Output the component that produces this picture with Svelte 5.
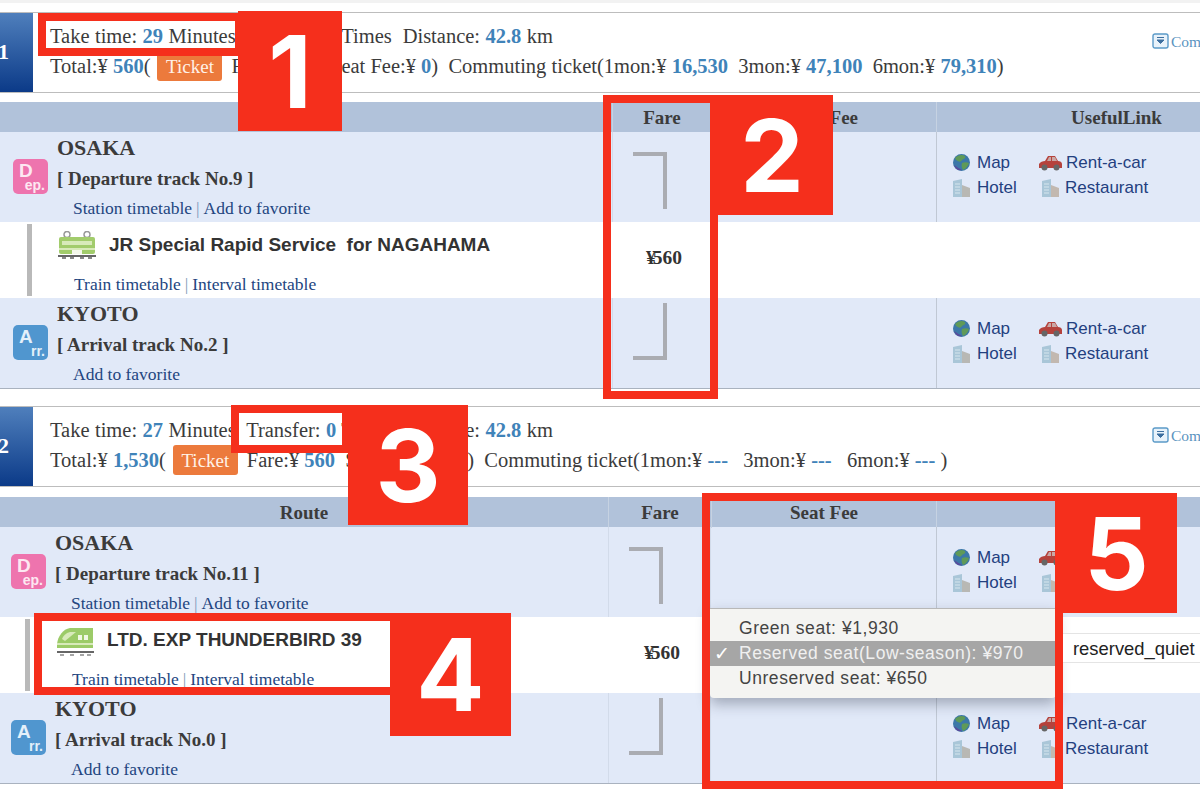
<script>
  // Route search results, two candidates
  const routes = [
    {
      no: 1,
      cls: 'first',
      time: 29,
      total: '560',
      seat: '0',
      commute: ['16,530', '47,100', '79,310'],
      gapped: false,
      depTrack: 'No.9',
      train: 'JR Special Rapid Service  for NAGAHAMA',
      arrTrack: 'No.2'
    },
    {
      no: 2,
      cls: 'second',
      time: 27,
      total: '1,530',
      seat: '970',
      commute: ['---', '---', '---'],
      gapped: true,
      depTrack: 'No.11',
      train: 'LTD. EXP THUNDERBIRD 39',
      arrTrack: 'No.0'
    }
  ];

  const callouts = [
    { n: 1, box: 'box1', tag: 'tag1' },
    { n: 2, box: 'box2', tag: 'tag2' },
    { n: 3, box: 'box3', tag: 'tag3' },
    { n: 4, box: 'box4', tag: 'tag4' },
    { n: 5, box: 'box5', tag: 'tag5' }
  ];
</script>

{#snippet links()}
  <div class="useful">
    <div class="link">
      <svg width="19" height="19" viewBox="0 0 19 19">
        <circle cx="9.5" cy="9.5" r="8.5" fill="#3c78a8" />
        <path d="M3 5c3-3 7-4 10-2 1 2-1 3-3 4-1 2-3 2-4 1C5 8 4 7 3 5z" fill="#5f9a58" />
        <path d="M10 10c2-1 5-1 7 0-1 3-3 6-6 7-1-2-2-4-1-7z" fill="#5f9a58" />
        <path d="M2 12c3 2 6 4 8 5-3 1-6 0-8-5z" fill="#5a4a9c" />
      </svg>
      <span>Map</span>
    </div>
    <div class="link">
      <svg width="25" height="17" viewBox="0 0 25 17">
        <path d="M1 10c1-2 4-3 6-3l3-5h7l3 5c2 0 4 1 4 3v4H1z" fill="#b5423c" />
        <path d="M9 7l2-4h2v4zM14 3h3l2 4h-5z" fill="#c9a8a6" />
        <circle cx="6.5" cy="13.500" r="3" fill="#666" />
        <circle cx="18.5" cy="13.500" r="3" fill="#666" />
      </svg>
      <span>Rent-a-car</span>
    </div>
    <div class="link">
      <svg width="19" height="20" viewBox="0 0 19 20">
        <path d="M1 3l9-2v18H1z" fill="#a9c6d8" />
        <path d="M10 7l8 3v9h-8z" fill="#b8b8b4" />
        <path d="M3 6h5M3 9h5M3 12h5M3 15h5" stroke="#d6e6ee" stroke-width="1" />
      </svg>
      <span>Hotel</span>
    </div>
    <div class="link">
      <svg width="19" height="20" viewBox="0 0 19 20">
        <path d="M1 3l9-2v18H1z" fill="#a9c6d8" />
        <path d="M10 7l8 3v9h-8z" fill="#c2b8b0" />
        <path d="M3 6h5M3 9h5M3 12h5M3 15h5" stroke="#d6e6ee" stroke-width="1" />
      </svg>
      <span>Restaurant</span>
    </div>
  </div>
{/snippet}

{#snippet stop(kind, name, track, timetable)}
  <div class="row stop">
    <div class="cell route">
      <div class="badge {kind}">
        <span class="big">{kind === 'dep' ? 'D' : 'A'}</span>
        <span class="small">{kind === 'dep' ? 'ep.' : 'rr.'}</span>
      </div>
      <div class="station">
        <div class="name">{name}</div>
        <div class="track">[ {kind === 'dep' ? 'Departure' : 'Arrival'} track {track} ]</div>
        <div class="sub">
          {#if timetable}<a href="#top">Station timetable</a><i>|</i>{/if}<a href="#top">Add to favorite</a>
        </div>
      </div>
    </div>
    <div class="cell fare">
      <span class="bracket {kind}"></span>
    </div>
    <div class="cell seat"></div>
    <div class="cell usefulcell">
      {@render links()}
    </div>
  </div>
{/snippet}

<div class="page">
  {#each routes as r}
    <section class={r.cls}>
      <div class="summary">
        <div class="num">{r.no}</div>
        <div class="lines">
          <div class="first-line">
            Take time: <b>{r.time}</b> Minutes&nbsp; Transfer: <b>0</b> Times&nbsp; Distance: <b>42.8</b> km
          </div>
          <div>
            Total:¥ <b>{r.total}</b>(<span class="ticket">Ticket</span>Fare:¥ <b>560</b>&nbsp; Seat Fee:¥ <b>{r.seat}</b>)&nbsp; Commuting ticket(1mon:¥ <b>{r.commute[0]}</b>{r.gapped ? '\u00a0' : ''}&nbsp; 3mon:¥ <b>{r.commute[1]}</b>{r.gapped ? '\u00a0' : ''}&nbsp; 6mon:¥ <b>{r.commute[2]}</b>{r.gapped ? ' ' : ''})
          </div>
        </div>
        <div class="comment">
          <svg width="17" height="16" viewBox="0 0 17 16">
            <rect x="1" y="1" width="15" height="14" rx="2" fill="#e8f2fa" stroke="#5b9ac8" stroke-width="1.4" />
            <path d="M5 4.500h7M5 7l3.500 3.500L12 7z" fill="#3d6f9f" stroke="#3d6f9f" />
          </svg>
          <span>Comment</span>
        </div>
      </div>

      <div class="table">
        <div class="row head">
          <div class="cell route">Route</div>
          <div class="cell fare">Fare</div>
          <div class="cell seat">Seat Fee</div>
          <div class="cell usefulcell">UsefulLink</div>
        </div>

        {@render stop('dep', 'OSAKA', r.depTrack, true)}

        <div class="row train">
          <div class="cell route">
            <div class="rail"></div>
            <div class="service">
              <div class="title">
                {#if r.no === 1}
                  <svg class="loco" width="38" height="30" viewBox="0 0 38 30">
                    <circle cx="9" cy="3.500" r="3" fill="none" stroke="#999" stroke-width="1.500" />
                    <circle cx="29" cy="3.500" r="3" fill="none" stroke="#999" stroke-width="1.500" />
                    <rect x="1" y="6" width="36" height="17" rx="2" fill="#a2cc6c" />
                    <rect x="4" y="10" width="30" height="4" fill="#d8eaba" />
                    <rect x="1" y="17" width="36" height="2" fill="#d8eaba" />
                    <rect x="14" y="19" width="10" height="4" fill="#f4f8ea" />
                    <rect x="0" y="24" width="38" height="2" fill="#666" />
                    <path d="M4 27h4M12 27h4M22 27h4M30 27h4" stroke="#888" stroke-width="2" />
                  </svg>
                {:else}
                  <svg class="loco" width="38" height="30" viewBox="0 0 38 30">
                    <path d="M1 18C2 10 7 3 14 2h23v20H1z" fill="#9ccb68" />
                    <path d="M6 13c1-3 4-6 8-7h6L9 15z" fill="#d8eaba" />
                    <rect x="22" y="9" width="4" height="5" fill="#f0f8e4" />
                    <rect x="28" y="9" width="4" height="5" fill="#f0f8e4" />
                    <rect x="1" y="17" width="36" height="2" fill="#d8eaba" />
                    <rect x="1" y="25" width="37" height="2" fill="#666" />
                    <path d="M4 29h4M14 29h4M24 29h4M31 29h4" stroke="#888" stroke-width="1.500" />
                  </svg>
                {/if}
                <span class="tname">{r.train}</span>
              </div>
              <div class="sub">
                <a href="#top">Train timetable</a><i>|</i><a href="#top">Interval timetable</a>
              </div>
            </div>
          </div>
          <div class="cell fare"><strong><em>¥</em>560</strong></div>
          <div class="cell seat"></div>
          <div class="cell usefulcell"></div>
        </div>

        {@render stop('arr', 'KYOTO', r.arrTrack, false)}
      </div>
    </section>
  {/each}

  <!-- seat dropdown sits over the second table -->
  <div class="menu">
    <div class="item">Green seat: ¥1,930</div>
    <div class="item picked"><span class="tick">✓</span>Reserved seat(Low-season): ¥970</div>
    <div class="item">Unreserved seat: ¥650</div>
  </div>
  <div class="hint">reserved_quiet</div>

  {#each callouts as c}
    <div class="frame {c.box}"></div>
    <div class="tag {c.tag}">{c.n}</div>
  {/each}
</div>

<style>
  :global(body) {
    margin: 0;
    background: #fff;
    overflow: hidden;
  }

  .page {
    position: relative;
    width: 1200px;
    height: 800px;
    overflow: hidden;
    box-sizing: border-box;
    padding-top: 9px;
    border-top: 3px solid #f2f2f2;
    font-family: "Liberation Serif", serif;
    color: #3b3b3b;
  }

  section {
    margin-bottom: 17px;
  }

  /* summary strip */
  .summary {
    display: flex;
    height: 81px;
    box-sizing: border-box;
    border-top: 1px solid #bdbdbd;
    border-bottom: 1px solid #bdbdbd;
    overflow: hidden;
  }

  .num {
    flex: none;
    width: 59px;
    margin-left: -26px;
    background: linear-gradient(#4f7fbc, #0b3a88);
    color: #fff;
    font: bold 22px/78px "Liberation Serif", serif;
    text-align: center;
  }

  .lines {
    flex: 1;
    padding: 8px 0 0 17px;
    font-size: 20.500px;
    line-height: 30px;
    white-space: nowrap;
  }

  .first-line {
    word-spacing: 0.3px;
  }

  .lines b {
    color: #3f83b9;
  }

  .ticket {
    display: inline-block;
    width: 65px;
    height: 30px;
    margin: 0 9px 0 7px;
    vertical-align: top;
    background: #ec7a3c;
    border-radius: 3px;
    color: #fff2e8;
    font-size: 19px;
    line-height: 31px;
    text-align: center;
  }

  .comment {
    flex: none;
    width: 48px;
    padding-top: 20px;
    display: flex;
    align-items: flex-start;
    gap: 2px;
    color: #5b93c0;
    font-size: 15.500px;
    line-height: 18px;
    overflow: hidden;
  }

  .comment svg {
    flex: none;
  }

  /* table */
  .table {
    margin-top: 9px;
    border-bottom: 1px solid #a9b2bf;
  }

  .second .table {
    margin-top: 10px;
  }

  .row {
    display: grid;
    grid-template-columns: 612px 99px 225px 360px;
  }

  .second .row {
    grid-template-columns: 608px 103px 225px 360px;
  }

  .head {
    height: 30px;
    background: #b1c2da;
    font-weight: bold;
    font-size: 19px;
    line-height: 31px;
    text-align: center;
  }

  .head .cell + .cell {
    border-left: 1px solid #c6d2e2;
  }

  .stop {
    height: 90px;
    background: #e1e9f8;
  }

  .train {
    height: 76px;
    background: #fff;
  }

  .stop .usefulcell {
    border-left: 1px solid #c0c8d4;
  }

  .stop .fare {
    border-left: 1px solid #d2dbea;
    border-right: 1px solid #d2dbea;
  }

  .route {
    min-width: 0;
  }

  .stop .route {
    display: flex;
    padding-left: 13px;
  }

  .second .stop .route {
    padding-left: 11px;
  }

  .badge {
    flex: none;
    position: relative;
    width: 35px;
    height: 35px;
    margin-top: 27px;
    border-radius: 5px;
    font-family: "Liberation Sans", sans-serif;
    font-weight: bold;
    line-height: 1;
  }

  .badge.dep {
    background: #ee74ae;
    color: #fde8f2;
  }

  .badge.arr {
    background: #5096cf;
    color: #e4f0fa;
  }

  .big {
    position: absolute;
    left: 6px;
    top: 2px;
    font-size: 19px;
  }

  .small {
    position: absolute;
    right: 3px;
    bottom: 2px;
    font-size: 14px;
  }

  .station {
    margin-left: 9px;
  }

  .name {
    font-weight: bold;
    font-size: 22px;
    line-height: 32px;
  }

  .track {
    font-weight: bold;
    font-size: 19px;
    line-height: 30px;
  }

  .sub {
    padding-left: 16px;
    font-size: 17.500px;
    line-height: 28px;
    color: #23457f;
    white-space: nowrap;
  }

  .sub a {
    color: inherit;
    text-decoration: none;
  }

  .sub i {
    margin: 0 4px;
    font-style: normal;
    color: #7f9ab8;
  }

  .train .route {
    display: flex;
    padding-left: 27px;
  }

  .second .train .route {
    padding-left: 25px;
  }

  .rail {
    width: 5px;
    height: 72px;
    margin-top: 2px;
    background: #b9b9b9;
  }

  .service {
    margin-left: 26px;
  }

  .title {
    display: flex;
    align-items: flex-start;
    height: 48px;
    padding-top: 9px;
    box-sizing: border-box;
  }

  .loco {
    flex: none;
  }

  .tname {
    margin: 3px 0 0 13px;
    font: bold 19px/22px "Liberation Sans", sans-serif;
    white-space: pre;
    color: #333;
  }

  .fare {
    display: flex;
    align-items: center;
    justify-content: center;
  }

  .head .fare {
    display: block;
  }

  .train strong {
    font-size: 19.500px;
    margin: -4px 0 0 5px;
    color: #333;
  }

  .train em {
    font-style: normal;
    letter-spacing: -3px;
  }

  .bracket {
    align-self: flex-start;
    width: 34px;
    height: 57px;
    box-sizing: border-box;
    margin-right: 24px;
    border-right: 4px solid #aaacb2;
  }

  .bracket.dep {
    margin-top: 20px;
    border-top: 4px solid #aaacb2;
  }

  .bracket.arr {
    margin-top: 5px;
    border-bottom: 4px solid #aaacb2;
  }

  .second .bracket {
    margin-right: 28px;
  }

  /* useful links */
  .useful {
    display: grid;
    grid-template-columns: 86px auto;
    justify-content: start;
    grid-auto-rows: 25px;
    padding: 18px 0 0 15px;
    font: 17px/25px "Liberation Sans", sans-serif;
    color: #23407f;
  }

  .link {
    display: flex;
    align-items: center;
    gap: 6px;
  }

  .link svg {
    flex: none;
  }

  .link:nth-child(2) {
    gap: 3px;
  }

  .link:nth-child(4) {
    padding-left: 3px;
    gap: 5px;
  }

  /* dropdown */
  .menu {
    position: absolute;
    left: 710px;
    top: 605px;
    width: 346px;
    height: 90px;
    box-sizing: border-box;
    padding-top: 7px;
    background: #f4f4f2;
    border-top: 1px solid #b8b8b8;
    border-radius: 0 0 4px 4px;
    box-shadow: 0 6px 14px rgba(40, 50, 70, 0.35);
    font: 17.500px/25px "Liberation Sans", sans-serif;
    color: #444;
  }

  .item {
    position: relative;
    padding-left: 29px;
    letter-spacing: 0.55px;
  }

  .picked {
    background: #a6a6a6;
    color: #f0f0f0;
  }

  .tick {
    position: absolute;
    left: 4px;
    color: #fff;
    font-family: "DejaVu Sans", sans-serif;
    font-size: 19px;
    font-weight: bold;
  }

  .hint {
    position: absolute;
    left: 1063px;
    top: 630px;
    width: 137px;
    height: 30px;
    box-sizing: border-box;
    padding-left: 10px;
    background: #fff;
    border: solid #e4e4e4;
    border-width: 1px 0;
    font: 18.400px/29px "Liberation Sans", sans-serif;
    color: #222;
  }

  /* red annotations, offsets are from the padding box under the 3px top line */
  .frame {
    position: absolute;
    box-sizing: border-box;
    border: 8px solid #f52f1c;
  }

  .box1 { left: 38px; top: 10px; width: 205px; height: 43px; }
  .box2 { left: 603px; top: 92px; width: 115px; height: 304px; }
  .box3 { left: 231px; top: 402px; width: 119px; height: 48px; }
  .box4 { left: 34px; top: 610px; width: 364px; height: 82px; }
  .box5 { left: 702px; top: 490px; width: 361px; height: 296px; }

  .tag {
    position: absolute;
    display: flex;
    align-items: center;
    justify-content: center;
    background: #f52f1c;
    color: #fff;
    font: 700 101px/1 Inter, sans-serif;
  }

  .tag1 { left: 238px; top: 8px; width: 104px; height: 120px; }
  .tag2 { left: 711px; top: 92px; width: 122px; height: 120px; }
  .tag3 { left: 348px; top: 402px; width: 120px; height: 120px; }
  .tag4 { left: 390px; top: 610px; width: 121px; height: 123px; }
  .tag5 { left: 1056px; top: 490px; width: 121px; height: 120px; }
</style>
